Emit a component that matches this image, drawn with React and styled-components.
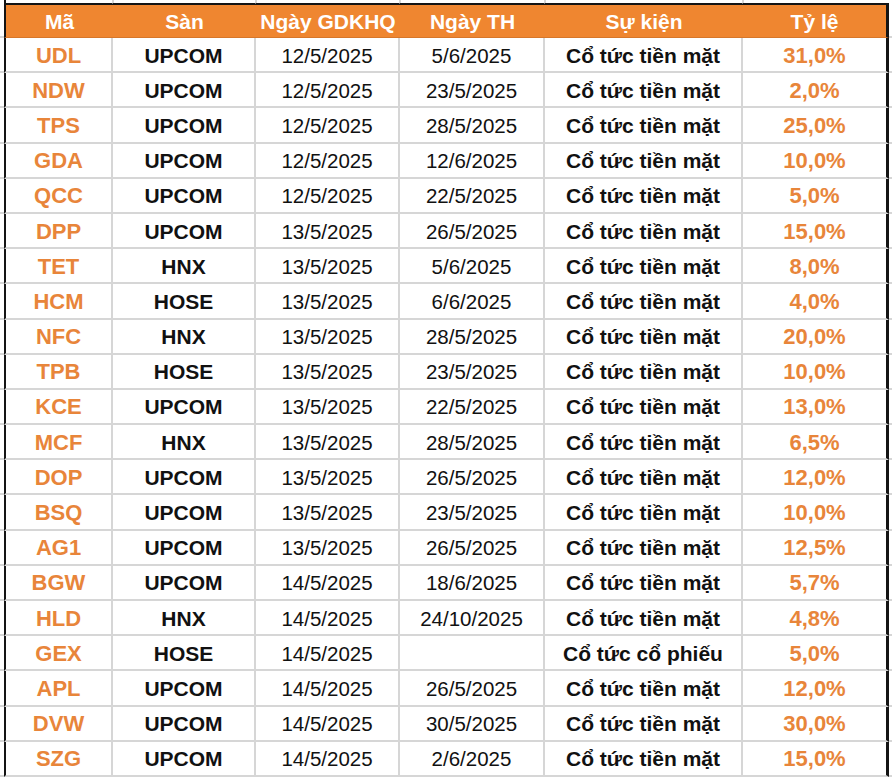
import React from 'react';
import styled, { createGlobalStyle } from 'styled-components';

const GlobalStyle = createGlobalStyle`
  html, body {
    margin: 0;
    padding: 0;
    background: #fff;
  }
  body {
    font-family: "Liberation Sans", Arial, sans-serif;
  }
  * {
    box-sizing: border-box;
  }
`;

const ORANGE = '#ef8630';
const ORANGE_TEXT = '#e8853a';
const GRID = '#d6d6d6';
const FRAME = '#141414';

// gutter | Mã | Sàn | Ngày GDKHQ | Ngày TH | Sự kiện | Tỷ lệ | gutter
const TEMPLATE = '4px 109px 143px 144px 145px 198px 146px 3px';

const rows = [
  ['UDL', 'UPCOM', '12/5/2025', '5/6/2025', 'Cổ tức tiền mặt', '31,0%'],
  ['NDW', 'UPCOM', '12/5/2025', '23/5/2025', 'Cổ tức tiền mặt', '2,0%'],
  ['TPS', 'UPCOM', '12/5/2025', '28/5/2025', 'Cổ tức tiền mặt', '25,0%'],
  ['GDA', 'UPCOM', '12/5/2025', '12/6/2025', 'Cổ tức tiền mặt', '10,0%'],
  ['QCC', 'UPCOM', '12/5/2025', '22/5/2025', 'Cổ tức tiền mặt', '5,0%'],
  ['DPP', 'UPCOM', '13/5/2025', '26/5/2025', 'Cổ tức tiền mặt', '15,0%'],
  ['TET', 'HNX', '13/5/2025', '5/6/2025', 'Cổ tức tiền mặt', '8,0%'],
  ['HCM', 'HOSE', '13/5/2025', '6/6/2025', 'Cổ tức tiền mặt', '4,0%'],
  ['NFC', 'HNX', '13/5/2025', '28/5/2025', 'Cổ tức tiền mặt', '20,0%'],
  ['TPB', 'HOSE', '13/5/2025', '23/5/2025', 'Cổ tức tiền mặt', '10,0%'],
  ['KCE', 'UPCOM', '13/5/2025', '22/5/2025', 'Cổ tức tiền mặt', '13,0%'],
  ['MCF', 'HNX', '13/5/2025', '28/5/2025', 'Cổ tức tiền mặt', '6,5%'],
  ['DOP', 'UPCOM', '13/5/2025', '26/5/2025', 'Cổ tức tiền mặt', '12,0%'],
  ['BSQ', 'UPCOM', '13/5/2025', '23/5/2025', 'Cổ tức tiền mặt', '10,0%'],
  ['AG1', 'UPCOM', '13/5/2025', '26/5/2025', 'Cổ tức tiền mặt', '12,5%'],
  ['BGW', 'UPCOM', '14/5/2025', '18/6/2025', 'Cổ tức tiền mặt', '5,7%'],
  ['HLD', 'HNX', '14/5/2025', '24/10/2025', 'Cổ tức tiền mặt', '4,8%'],
  ['GEX', 'HOSE', '14/5/2025', '', 'Cổ tức cổ phiếu', '5,0%'],
  ['APL', 'UPCOM', '14/5/2025', '26/5/2025', 'Cổ tức tiền mặt', '12,0%'],
  ['DVW', 'UPCOM', '14/5/2025', '30/5/2025', 'Cổ tức tiền mặt', '30,0%'],
  ['SZG', 'UPCOM', '14/5/2025', '2/6/2025', 'Cổ tức tiền mặt', '15,0%'],
];

const headers = ['Mã', 'Sàn', 'Ngày GDKHQ', 'Ngày TH', 'Sự kiện', 'Tỷ lệ'];

// how each column's text looks
const kinds = ['code', 'label', 'date', 'date', 'label', 'code'];

const Sheet = styled.div`
  width: 892px;
  height: 780px;
  overflow: hidden;
  display: flex;
  flex-direction: column;
`;

const Line = styled.div`
  display: grid;
  grid-template-columns: ${TEMPLATE};
  height: ${({ h }) => h};
  flex: none;
`;

const Gutter = styled.div`
  border-bottom: ${({ top }) => (top ? 'none' : `2px solid ${GRID}`)};
`;

const TopCell = styled.div`
  border-right: ${({ last }) => (last ? 'none' : `2px solid ${GRID}`)};
  border-bottom: 2px solid ${FRAME};
  border-left: ${({ first }) => (first ? `2px solid ${FRAME}` : 'none')};
  margin-right: ${({ last }) => (last ? '0' : '-1px')};
`;

const HeadCell = styled.div`
  display: flex;
  align-items: center;
  justify-content: center;
  background: ${ORANGE};
  color: #fff;
  font-weight: 700;
  font-size: 21px;
  padding-top: 1px;
  border-bottom: 1px solid #d7772a;
  border-left: ${({ first }) => (first ? `2px solid ${FRAME}` : 'none')};
  border-right: ${({ last }) => (last ? `3px solid ${FRAME}` : 'none')};
`;

const textStyles = {
  code: `color: ${ORANGE_TEXT}; font-weight: 700; font-size: 22px;`,
  label: `color: #111; font-weight: 700; font-size: 21px;`,
  date: `color: #111; font-weight: 400; font-size: 20.5px;`,
};

const Cell = styled.div`
  display: flex;
  align-items: center;
  justify-content: center;
  white-space: nowrap;
  padding-top: 2px;
  ${({ kind }) => textStyles[kind]}
  border-bottom: 2px solid ${GRID};
  border-left: ${({ first }) => (first ? `2px solid ${FRAME}` : 'none')};
  border-right: ${({ last }) => (last ? `3px solid ${FRAME}` : `2px solid ${GRID}`)};
`;

export default function App() {
  return (
    <>
      <GlobalStyle />
      <Sheet>
        <Line h="5px">
          <Gutter top />
          {headers.map((h, i) => (
            <TopCell key={h} first={i === 0} last={i === headers.length - 1} />
          ))}
          <Gutter top />
        </Line>
        <Line h="33px">
          <Gutter />
          {headers.map((h, i) => (
            <HeadCell key={h} first={i === 0} last={i === headers.length - 1}>
              {h}
            </HeadCell>
          ))}
          <Gutter />
        </Line>
        {rows.map((r) => (
          <Line key={r[0]} h="35.2px">
            <Gutter />
            {r.map((v, i) => (
              <Cell key={i} kind={kinds[i]} first={i === 0} last={i === r.length - 1}>
                {v}
              </Cell>
            ))}
            <Gutter />
          </Line>
        ))}
      </Sheet>
    </>
  );
}
